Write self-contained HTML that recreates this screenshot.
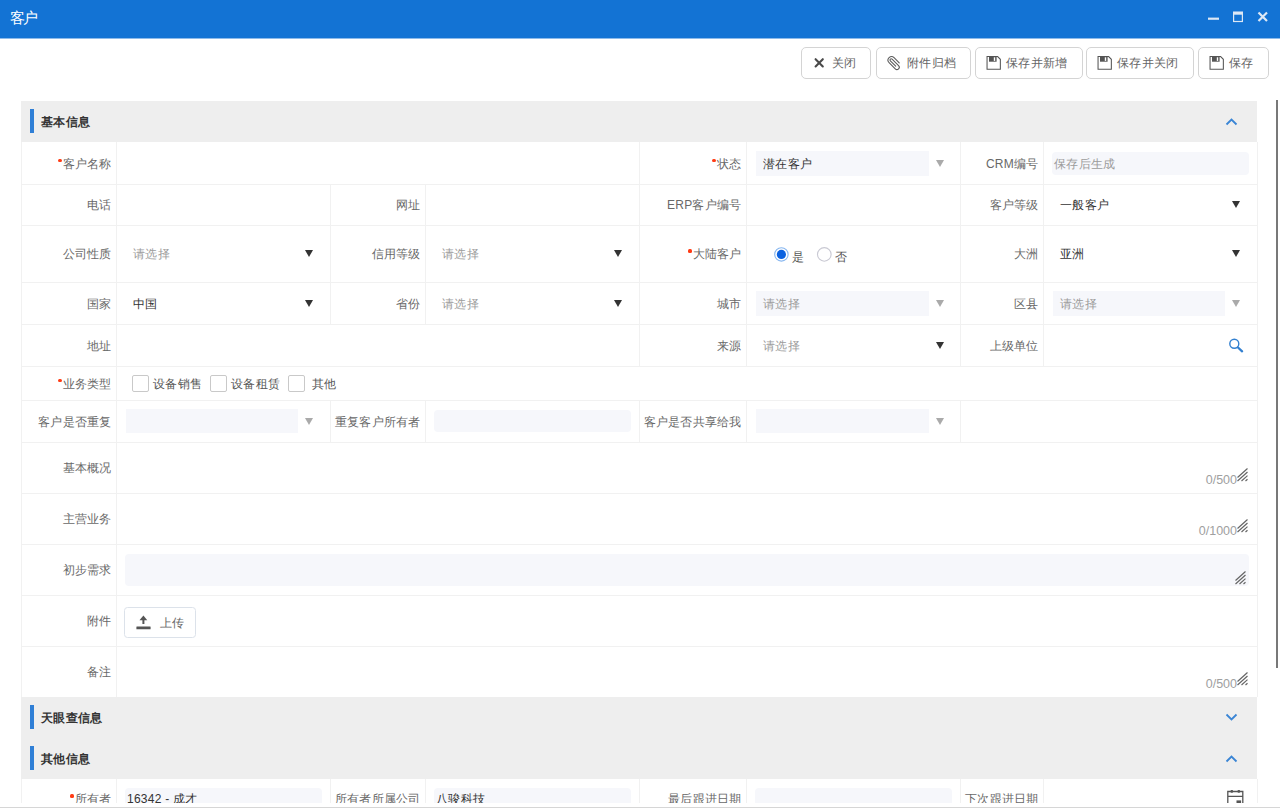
<!DOCTYPE html><html><head><meta charset="utf-8"><style>
*{box-sizing:border-box;margin:0;padding:0}
html,body{width:1280px;height:808px;overflow:hidden;background:#fff;font-family:"Liberation Sans",sans-serif;font-size:12px;letter-spacing:0.25px;color:#666}
.a{position:absolute}
#title{left:0;top:0;width:1280px;height:39px;background:#1373d4;border-bottom:1px solid #8dbbea}
#title .t{left:9.6px;top:9px;color:#fff;font-size:15px;line-height:18px;letter-spacing:-1.4px}
.btn{position:absolute;top:47px;height:32px;border:1px solid #d4d4d4;border-radius:5px;background:#fff;color:#666;font-size:12px;line-height:16px;white-space:nowrap}
.btn span{position:absolute;top:7px}
.btn svg{position:absolute}
.sb{left:1276px;top:100px;width:2px;height:568px;background:#787878}
.hd{position:absolute;left:21px;width:1236px;height:41px;background:#eeeeee}
.hd .bar{position:absolute;left:9px;top:8px;width:4px;height:24px;background:#2f7fd6}
.hd .tt{position:absolute;left:20px;top:13px;font-weight:bold;color:#333;font-size:12px;line-height:16px;white-space:nowrap}
.hd svg{position:absolute;left:1204px;top:16px}
.hl{position:absolute;height:1px;background:#f1f1f1}
.vl{position:absolute;width:1px;background:#f1f1f1}
.lb{position:absolute;text-align:right;font-size:12px;line-height:16px;color:#686868;white-space:nowrap}
.req{display:inline-block;width:4px;height:3.5px;background:#ff3b14;border-radius:1.5px;vertical-align:top;margin-top:3px;margin-right:1px}
.box{position:absolute;background:#f6f7fb}
.ph{position:absolute;color:#9c9c9c;font-size:12px;line-height:16px;white-space:nowrap}
.val{position:absolute;color:#333;font-size:12px;line-height:16px;white-space:nowrap}
.arr{position:absolute;width:0;height:0;border-left:4.5px solid transparent;border-right:4.5px solid transparent;border-top:7px solid #333}
.arr.g{border-top-color:#aaa}
.cnt{position:absolute;color:#a0a0a0;font-size:12.5px;letter-spacing:0;line-height:15px;white-space:nowrap;text-align:right}
.cb{position:absolute;width:17px;height:17px;border:1px solid #c9c9c9;border-radius:2px;background:#fff}
.rs{position:absolute}
</style></head><body>
<div id="title" class="a"><div class="t a">客户</div>
<svg class="a" style="left:1205px;top:8px" width="70" height="20" viewBox="0 0 70 20">
<rect x="3" y="9.6" width="11" height="2.2" fill="#dde8f5"/>
<rect x="28.6" y="4.3" width="8.8" height="9.2" fill="none" stroke="#dde8f5" stroke-width="1.2"/>
<rect x="28" y="3.7" width="10" height="3" fill="#dde8f5"/>
<path d="M53.5 4.5 L62 13 M62 4.5 L53.5 13" stroke="#dde8f5" stroke-width="2.2"/>
</svg></div>
<div class="btn" style="left:801px;width:70px"><svg style="left:12px;top:9px" width="11" height="11" viewBox="0 0 11 11"><path d="M1.6 2.2L8.8 9.5M8.8 2.2L1.6 9.5" stroke="#4a4a4a" stroke-width="2.1" stroke-linecap="round"/></svg><span style="left:30px">关闭</span></div>
<div class="btn" style="left:876px;width:95px"><svg style="left:7px;top:5px" width="20" height="20" viewBox="0 0 20 20"><path transform="translate(9.65 9.9) scale(0.92) translate(-9.65 -9.8)" d="M15.7 9.76L10.12 4.18A3.84 3.84 0 0 0 4.68 9.62L11.4 16.36A2.54 2.54 0 0 0 15.0 12.76L7.93 5.70A1.31 1.31 0 0 0 6.07 7.56L11.9 13.4" fill="none" stroke="#5a5a5a" stroke-width="1.15" stroke-linecap="round"/></svg><span style="left:30px">附件归档</span></div>
<div class="btn" style="left:975px;width:108px"><svg style="left:10px;top:8px" width="16" height="16" viewBox="0 0 16 16"><path d="M1.05 0.55H11.6L14.35 3.3V13.25H1.05Z" fill="none" stroke="#555" stroke-width="1.05"/><rect x="3" y="0.9" width="7.6" height="4.8" fill="#555"/><rect x="7.8" y="1.3" width="1.4" height="3.6" fill="#fff"/></svg><span style="left:30px">保存并新增</span></div>
<div class="btn" style="left:1086px;width:108px"><svg style="left:10px;top:8px" width="16" height="16" viewBox="0 0 16 16"><path d="M1.05 0.55H11.6L14.35 3.3V13.25H1.05Z" fill="none" stroke="#555" stroke-width="1.05"/><rect x="3" y="0.9" width="7.6" height="4.8" fill="#555"/><rect x="7.8" y="1.3" width="1.4" height="3.6" fill="#fff"/></svg><span style="left:30px">保存并关闭</span></div>
<div class="btn" style="left:1198px;width:71px"><svg style="left:10px;top:8px" width="16" height="16" viewBox="0 0 16 16"><path d="M1.05 0.55H11.6L14.35 3.3V13.25H1.05Z" fill="none" stroke="#555" stroke-width="1.05"/><rect x="3" y="0.9" width="7.6" height="4.8" fill="#555"/><rect x="7.8" y="1.3" width="1.4" height="3.6" fill="#fff"/></svg><span style="left:30px">保存</span></div>
<div class="a sb"></div>
<div class="a" style="left:0;top:101px;width:1280px;height:702px;overflow:hidden">
<div class="hd" style="top:0px"><div class="bar"></div><div class="tt">基本信息</div><svg style="top:17px" width="13" height="9" viewBox="0 0 13 9"><path d="M1.5 6.5L6.5 1.5L11.5 6.5" fill="none" stroke="#3a85d5" stroke-width="1.8"/></svg></div>
<div class="hl" style="left:21px;top:83px;width:1236px"></div>
<div class="hl" style="left:21px;top:124px;width:1236px"></div>
<div class="hl" style="left:21px;top:181px;width:1236px"></div>
<div class="hl" style="left:21px;top:223px;width:1236px"></div>
<div class="hl" style="left:21px;top:265px;width:1236px"></div>
<div class="hl" style="left:21px;top:299px;width:1236px"></div>
<div class="hl" style="left:21px;top:341px;width:1236px"></div>
<div class="hl" style="left:21px;top:392px;width:1236px"></div>
<div class="hl" style="left:21px;top:443px;width:1236px"></div>
<div class="hl" style="left:21px;top:494px;width:1236px"></div>
<div class="hl" style="left:21px;top:545px;width:1236px"></div>
<div class="hl" style="left:21px;top:596px;width:1236px"></div>
<div class="vl" style="left:21px;top:41px;height:555px"></div>
<div class="vl" style="left:1257px;top:41px;height:555px"></div>
<div class="vl" style="left:116px;top:41px;height:42px"></div>
<div class="vl" style="left:639px;top:41px;height:42px"></div>
<div class="vl" style="left:746px;top:41px;height:42px"></div>
<div class="vl" style="left:960px;top:41px;height:42px"></div>
<div class="vl" style="left:1043px;top:41px;height:42px"></div>
<div class="lb" style="right:1168.5px;top:54.5px"><span class="req"></span>客户名称</div>
<div class="lb" style="right:538.5px;top:54.5px"><span class="req"></span>状态</div>
<div class="box" style="left:756px;top:50px;width:173px;height:25px;border-radius:0px"></div>
<div class="val" style="left:763px;top:54.5px">潜在客户</div>
<div class="arr g" style="left:935.5px;top:58.5px"></div>
<div class="lb" style="right:241.5px;top:54.5px">CRM编号</div>
<div class="box" style="left:1052px;top:51px;width:197px;height:23px;border-radius:4px"></div>
<div class="ph" style="left:1054px;top:54.5px">保存后生成</div>
<div class="vl" style="left:116px;top:83px;height:41px"></div>
<div class="vl" style="left:330px;top:83px;height:41px"></div>
<div class="vl" style="left:425px;top:83px;height:41px"></div>
<div class="vl" style="left:639px;top:83px;height:41px"></div>
<div class="vl" style="left:746px;top:83px;height:41px"></div>
<div class="vl" style="left:960px;top:83px;height:41px"></div>
<div class="vl" style="left:1043px;top:83px;height:41px"></div>
<div class="lb" style="right:1168.5px;top:96.0px">电话</div>
<div class="lb" style="right:859.5px;top:96.0px">网址</div>
<div class="lb" style="right:538.5px;top:96.0px">ERP客户编号</div>
<div class="lb" style="right:241.5px;top:96.0px">客户等级</div>
<div class="val" style="left:1060px;top:96.0px">一般客户</div>
<div class="arr" style="left:1231.5px;top:100.0px"></div>
<div class="vl" style="left:116px;top:124px;height:57px"></div>
<div class="vl" style="left:330px;top:124px;height:57px"></div>
<div class="vl" style="left:425px;top:124px;height:57px"></div>
<div class="vl" style="left:639px;top:124px;height:57px"></div>
<div class="vl" style="left:746px;top:124px;height:57px"></div>
<div class="vl" style="left:960px;top:124px;height:57px"></div>
<div class="vl" style="left:1043px;top:124px;height:57px"></div>
<div class="lb" style="right:1168.5px;top:145.0px">公司性质</div>
<div class="ph" style="left:133px;top:145.0px">请选择</div>
<div class="arr" style="left:304.5px;top:149.0px"></div>
<div class="lb" style="right:859.5px;top:145.0px">信用等级</div>
<div class="ph" style="left:442px;top:145.0px">请选择</div>
<div class="arr" style="left:613.5px;top:149.0px"></div>
<div class="lb" style="right:538.5px;top:145.0px"><span class="req"></span>大陆客户</div>
<svg class="rs" style="left:773px;top:145px" width="17" height="17" viewBox="0 0 17 17"><circle cx="8.4" cy="8.4" r="6.7" fill="#fff" stroke="#86b6f0" stroke-width="1.1"/><circle cx="8.4" cy="8.4" r="4.6" fill="#0b62e0"/></svg>
<div class="val" style="left:792px;top:148.0px"><span style="color:#555">是</span></div>
<svg class="rs" style="left:816px;top:145px" width="17" height="17" viewBox="0 0 17 17"><circle cx="8.3" cy="8.4" r="6.8" fill="#fff" stroke="#c9c9d3" stroke-width="1.1"/></svg>
<div class="val" style="left:835px;top:148.0px"><span style="color:#555">否</span></div>
<div class="lb" style="right:241.5px;top:145.0px">大洲</div>
<div class="val" style="left:1060px;top:145.0px">亚洲</div>
<div class="arr" style="left:1231.5px;top:149.0px"></div>
<div class="vl" style="left:116px;top:181px;height:42px"></div>
<div class="vl" style="left:330px;top:181px;height:42px"></div>
<div class="vl" style="left:425px;top:181px;height:42px"></div>
<div class="vl" style="left:639px;top:181px;height:42px"></div>
<div class="vl" style="left:746px;top:181px;height:42px"></div>
<div class="vl" style="left:960px;top:181px;height:42px"></div>
<div class="vl" style="left:1043px;top:181px;height:42px"></div>
<div class="lb" style="right:1168.5px;top:194.5px">国家</div>
<div class="val" style="left:133px;top:194.5px">中国</div>
<div class="arr" style="left:304.5px;top:198.5px"></div>
<div class="lb" style="right:859.5px;top:194.5px">省份</div>
<div class="ph" style="left:442px;top:194.5px">请选择</div>
<div class="arr" style="left:613.5px;top:198.5px"></div>
<div class="lb" style="right:538.5px;top:194.5px">城市</div>
<div class="box" style="left:756px;top:190px;width:173px;height:25px;border-radius:0px"></div>
<div class="ph" style="left:763px;top:194.5px">请选择</div>
<div class="arr g" style="left:935.5px;top:198.5px"></div>
<div class="lb" style="right:241.5px;top:194.5px">区县</div>
<div class="box" style="left:1053px;top:190px;width:172px;height:25px;border-radius:0px"></div>
<div class="ph" style="left:1060px;top:194.5px">请选择</div>
<div class="arr g" style="left:1231.5px;top:198.5px"></div>
<div class="vl" style="left:116px;top:223px;height:42px"></div>
<div class="vl" style="left:639px;top:223px;height:42px"></div>
<div class="vl" style="left:746px;top:223px;height:42px"></div>
<div class="vl" style="left:960px;top:223px;height:42px"></div>
<div class="vl" style="left:1043px;top:223px;height:42px"></div>
<div class="lb" style="right:1168.5px;top:236.5px">地址</div>
<div class="lb" style="right:538.5px;top:236.5px">来源</div>
<div class="ph" style="left:763px;top:236.5px">请选择</div>
<div class="arr" style="left:935.5px;top:240.5px"></div>
<div class="lb" style="right:241.5px;top:236.5px">上级单位</div>
<svg class="rs" style="left:1227px;top:236px" width="18" height="18" viewBox="0 0 18 18"><circle cx="7.3" cy="6.8" r="4.5" fill="none" stroke="#3380d0" stroke-width="1.4"/><path d="M11 10.5L15.1 14.3" stroke="#3380d0" stroke-width="2.3" stroke-linecap="round"/></svg>
<div class="vl" style="left:116px;top:265px;height:34px"></div>
<div class="lb" style="right:1168.5px;top:274.5px"><span class="req"></span>业务类型</div>
<div class="cb" style="left:132px;top:274px"></div>
<div class="cb" style="left:210px;top:274px"></div>
<div class="cb" style="left:288px;top:274px"></div>
<div class="val" style="left:153px;top:274.5px"><span style="color:#555">设备销售</span></div>
<div class="val" style="left:231px;top:274.5px"><span style="color:#555">设备租赁</span></div>
<div class="val" style="left:312px;top:274.5px"><span style="color:#555">其他</span></div>
<div class="vl" style="left:116px;top:299px;height:42px"></div>
<div class="vl" style="left:330px;top:299px;height:42px"></div>
<div class="vl" style="left:425px;top:299px;height:42px"></div>
<div class="vl" style="left:639px;top:299px;height:42px"></div>
<div class="vl" style="left:746px;top:299px;height:42px"></div>
<div class="vl" style="left:960px;top:299px;height:42px"></div>
<div class="lb" style="right:1168.5px;top:312.5px">客户是否重复</div>
<div class="box" style="left:126px;top:308px;width:172px;height:24px;border-radius:0px"></div>
<div class="arr g" style="left:304.5px;top:316.5px"></div>
<div class="lb" style="right:859.5px;top:312.5px">重复客户所有者</div>
<div class="box" style="left:434px;top:309px;width:197px;height:22px;border-radius:4px"></div>
<div class="lb" style="right:538.5px;top:312.5px">客户是否共享给我</div>
<div class="box" style="left:756px;top:308px;width:173px;height:24px;border-radius:0px"></div>
<div class="arr g" style="left:935.5px;top:316.5px"></div>
<div class="vl" style="left:116px;top:341px;height:51px"></div>
<div class="lb" style="right:1168.5px;top:359.0px">基本概况</div>
<div class="cnt" style="right:43px;top:372px">0/500</div>
<svg class="rs" style="left:1236px;top:366px" width="13" height="15" viewBox="0 0 13 15"><path d="M1.5 10.5L11.5 1.5M1.5 14L11.5 5M5.5 14L11.5 8.6M9.5 14L11.5 12.2" stroke="#666" stroke-width="1.2"/></svg>
<div class="vl" style="left:116px;top:392px;height:51px"></div>
<div class="lb" style="right:1168.5px;top:410.0px">主营业务</div>
<div class="cnt" style="right:43px;top:423px">0/1000</div>
<svg class="rs" style="left:1236px;top:417px" width="13" height="15" viewBox="0 0 13 15"><path d="M1.5 10.5L11.5 1.5M1.5 14L11.5 5M5.5 14L11.5 8.6M9.5 14L11.5 12.2" stroke="#666" stroke-width="1.2"/></svg>
<div class="vl" style="left:116px;top:443px;height:51px"></div>
<div class="lb" style="right:1168.5px;top:461.0px">初步需求</div>
<div class="box" style="left:125px;top:453px;width:1124px;height:32px;border-radius:4px"></div>
<svg class="rs" style="left:1234px;top:469px" width="13" height="15" viewBox="0 0 13 15"><path d="M1.5 10.5L11.5 1.5M1.5 14L11.5 5M5.5 14L11.5 8.6M9.5 14L11.5 12.2" stroke="#666" stroke-width="1.2"/></svg>
<div class="vl" style="left:116px;top:494px;height:51px"></div>
<div class="lb" style="right:1168.5px;top:512.0px">附件</div>
<div class="a" style="left:124px;top:506px;width:72px;height:31px;border:1px solid #dce2ea;border-radius:3.5px;background:#fff"></div>
<svg class="rs" style="left:135px;top:513px" width="17" height="17" viewBox="0 0 17 17"><path d="M4.5 6.3L8.4 1.6L12.3 6.3Z" fill="#555"/><rect x="7.4" y="5.5" width="2" height="4.5" fill="#555"/><rect x="1.4" y="12.6" width="14.2" height="2.6" rx="0.3" fill="#555"/></svg>
<div class="val" style="left:160px;top:514.0px"><span style="color:#666">上传</span></div>
<div class="vl" style="left:116px;top:545px;height:51px"></div>
<div class="lb" style="right:1168.5px;top:563.0px">备注</div>
<div class="cnt" style="right:43px;top:576px">0/500</div>
<svg class="rs" style="left:1236px;top:570px" width="13" height="15" viewBox="0 0 13 15"><path d="M1.5 10.5L11.5 1.5M1.5 14L11.5 5M5.5 14L11.5 8.6M9.5 14L11.5 12.2" stroke="#666" stroke-width="1.2"/></svg>
<div class="hd" style="top:596px"><div class="bar"></div><div class="tt">天眼查信息</div><svg style="top:16px" width="13" height="9" viewBox="0 0 13 9"><path d="M1.5 1.5L6.5 6.5L11.5 1.5" fill="none" stroke="#3a85d5" stroke-width="1.8"/></svg></div>
<div class="hd" style="top:637px"><div class="bar"></div><div class="tt">其他信息</div><svg style="top:17px" width="13" height="9" viewBox="0 0 13 9"><path d="M1.5 6.5L6.5 1.5L11.5 6.5" fill="none" stroke="#3a85d5" stroke-width="1.8"/></svg></div>
<div class="vl" style="left:21px;top:678px;height:42px"></div>
<div class="vl" style="left:116px;top:678px;height:42px"></div>
<div class="vl" style="left:330px;top:678px;height:42px"></div>
<div class="vl" style="left:425px;top:678px;height:42px"></div>
<div class="vl" style="left:639px;top:678px;height:42px"></div>
<div class="vl" style="left:746px;top:678px;height:42px"></div>
<div class="vl" style="left:960px;top:678px;height:42px"></div>
<div class="vl" style="left:1043px;top:678px;height:42px"></div>
<div class="vl" style="left:1257px;top:678px;height:42px"></div>
<div class="lb" style="right:1168.5px;top:690.0px"><span class="req"></span>所有者</div>
<div class="box" style="left:125px;top:687px;width:197px;height:24px;border-radius:4px"></div>
<div class="val" style="left:127px;top:689.8px">16342 - 成才</div>
<div class="lb" style="right:859.5px;top:690.0px">所有者所属公司</div>
<div class="box" style="left:434px;top:687px;width:197px;height:24px;border-radius:4px"></div>
<div class="val" style="left:436px;top:689.8px">八骏科技</div>
<div class="lb" style="right:538.5px;top:690.0px">最后跟进日期</div>
<div class="box" style="left:755px;top:687px;width:197px;height:24px;border-radius:4px"></div>
<div class="lb" style="right:241.5px;top:690.0px">下次跟进日期</div>
<svg class="rs" style="left:1226px;top:688px" width="19" height="16" viewBox="0 0 19 16"><path d="M1.8 14V2.5H16.8V14M1.8 7.3H16.8" fill="none" stroke="#555" stroke-width="1.3"/><rect x="4.5" y="1" width="2.6" height="2.8" rx="1" fill="#555"/><rect x="11.5" y="1" width="2.6" height="2.8" rx="1" fill="#555"/><rect x="10.5" y="11.4" width="4.6" height="2.6" fill="#555"/></svg>
</div>
<div class="a" style="left:0;top:807px;width:1280px;height:1px;background:#d6d6d6"></div>
</body></html>
